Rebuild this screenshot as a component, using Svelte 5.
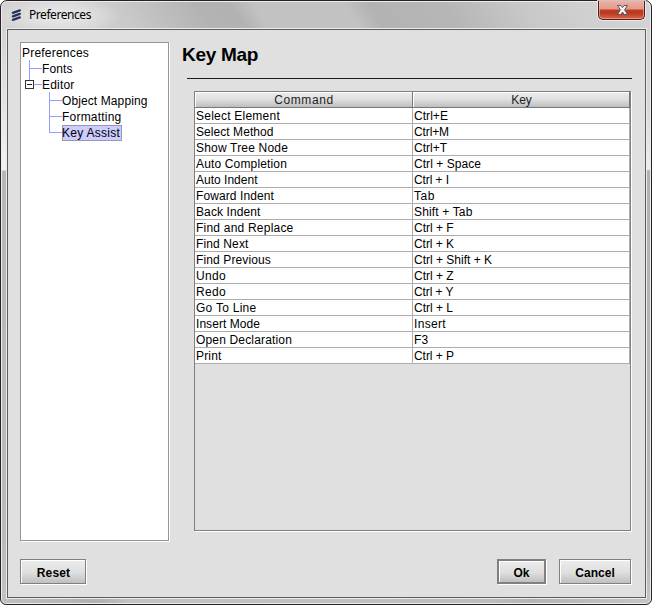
<script>
  const rows = [
    ['Select Element', 84, 'Ctrl+E', 34],
    ['Select Method', 77.5, 'Ctrl+M', 35],
    ['Show Tree Node', 92, 'Ctrl+T', 33],
    ['Auto Completion', 91, 'Ctrl + Space', 67],
    ['Auto Indent', 61.5, 'Ctrl + I', 35],
    ['Foward Indent', 78, 'Tab', 21],
    ['Back Indent', 64.5, 'Shift + Tab', 58.5],
    ['Find and Replace', 97.5, 'Ctrl + F', 39.5],
    ['Find Next', 52.5, 'Ctrl + K', 40],
    ['Find Previous', 75, 'Ctrl + Shift + K', 78],
    ['Undo', 30, 'Ctrl + Z', 39.5],
    ['Redo', 30, 'Ctrl + Y', 39.5],
    ['Go To Line', 60.5, 'Ctrl + L', 39],
    ['Insert Mode', 64, 'Insert', 32],
    ['Open Declaration', 96, 'F3', 14.5],
    ['Print', 25.5, 'Ctrl + P', 40]
  ];

  const tree = [
    { text: 'Preferences', depth: 0, width: 67 },
    { text: 'Fonts', depth: 1, width: 30.5 },
    { text: 'Editor', depth: 1, width: 32.5 },
    { text: 'Object Mapping', depth: 2, width: 85.5 },
    { text: 'Formatting', depth: 2, width: 59.5 },
    { text: 'Key Assist', depth: 2, width: 58, selected: true }
  ];

  // Spreads the letters of a label over a fixed width.
  function fit(node, width) {
    const natural = node.getBoundingClientRect().width;
    node.style.letterSpacing = (width - natural) / node.textContent.length + 'px';
  }
</script>

<div class="window">
  <header>
    <svg class="logo" width="11" height="12" viewBox="0 0 11 12">
      <g stroke="#26355b" stroke-width="2.3" stroke-linecap="round">
        <path d="M1.900 3.800L8.800 1.400M1.900 7.300L8.800 4.900M1.900 10.800L8.800 8.400" />
      </g>
    </svg>
    <span class="caption"><span use:fit={62}>Preferences</span></span>
    <div class="close">
      <svg width="13" height="12" viewBox="0 0 13 12">
        <path
          d="M1.500 1.500H4.900L6.500 3.600L8.100 1.500H11.500L8.600 5.800L11.500 10.500H8.100L6.500 8L4.900 10.500H1.500L4.400 5.800Z"
          fill="#f4f4f4" stroke="#515967" stroke-width="1" stroke-linejoin="round" />
      </svg>
    </div>
  </header>

  <main>
    <div class="panes">
      <div class="tree">
        <svg class="lines" width="60" height="100" viewBox="0 0 60 100" shape-rendering="crispEdges">
          <g fill="#9999ff">
            <rect x="8" y="17" width="1" height="20" />
            <rect x="8" y="25" width="13" height="1" />
            <rect x="13" y="41" width="8" height="1" />
            <rect x="28" y="49" width="1" height="41" />
            <rect x="28" y="57" width="13" height="1" />
            <rect x="28" y="73" width="13" height="1" />
            <rect x="28" y="89" width="13" height="1" />
          </g>
          <rect x="4" y="37" width="9" height="9" fill="#333" />
          <rect x="5" y="38" width="7" height="7" fill="#fff" />
          <rect x="6" y="41" width="5" height="1" fill="#222" />
        </svg>
        {#each tree as item}
          <div class="node" style:padding-left="{item.depth * 20}px">
            <div class="tag" class:selected={item.selected}><span use:fit={item.width}>{item.text}</span></div>
          </div>
        {/each}
      </div>

      <section>
        <h1><span use:fit={76}>Key Map</span></h1>
        <div class="rule"></div>
        <div class="table">
          <div class="row head">
            <div class="command"><span use:fit={59.5}>Command</span></div>
            <div class="key"><span use:fit={20.5}>Key</span></div>
          </div>
          {#each rows as [command, cw, key, kw]}
            <div class="row">
              <div class="command"><span use:fit={cw}>{command}</span></div>
              <div class="key"><span use:fit={kw}>{key}</span></div>
            </div>
          {/each}
        </div>
      </section>
    </div>

    <footer>
      <div class="button reset"><span use:fit={33.5}>Reset</span></div>
      <div class="button ok"><span use:fit={16}>Ok</span></div>
      <div class="button cancel"><span use:fit={39.5}>Cancel</span></div>
    </footer>
  </main>
</div>

<style>
  :global(body) {
    margin: 0;
    background: #fff;
  }
  .window {
    box-sizing: border-box;
    width: 652px;
    height: 605px;
    padding: 0 5px 5px;
    border: 1px solid #242226;
    border-radius: 7px 7px 6px 6px;
    box-shadow: inset 0 0 0 1px #eeecec;
    background:
      radial-gradient(ellipse 62px 20px at 58px 15px, #ebebebdd, #e6e6e6aa 50%, #d8d8d800) 0 0 / 100% 29px no-repeat,
      linear-gradient(57deg, #d4d2d2 0, #d2d2d2 70px, #cacaca 110px, #bebebe 145px, #b3b3b3 178px, #b2b2b2 206px, #c2c2c2 226px, #c2c2c2 302px, #b3b3b3 322px, #b6b6b6 386px, #c8c8c8 450px, #d0d0d0 500px, #d4d4d4) 0 0 / 100% 29px no-repeat,
      linear-gradient(90deg, #c0c0c0, #b0b0b0 15%, #c3c3c3 20%, #bdbdbd 75%, #b4b4b4 82%, #c6c6c6) 0 100% / 100% 7px no-repeat,
      linear-gradient(#d4d2d2, #d4d2d2 29px, #f5f3f2 169px, #b9b6b6 170px, #bdbaba 540px, #c3c3c3) 0 0 / 7px 100% no-repeat,
      linear-gradient(#d2d2d2, #d8d8d8 110px, #eee 168px, #b2b2b2 170px, #b8b8b8 560px, #c5c5c5) 100% 0 / 7px 100% no-repeat;
    font: 12px/15px "Liberation Sans", Arial, sans-serif;
    color: #000;
    display: flex;
    flex-direction: column;
  }
  span {
    white-space: pre;
  }
  header {
    height: 27px;
    display: flex;
    align-items: flex-start;
    flex: none;
  }
  .logo {
    margin: 8px 0 0 5px;
  }
  .caption {
    margin: 6px 0 0 7px;
    font: 12px/16px "Noto Sans", "Open Sans", sans-serif;
    flex: 1;
  }
  .close {
    box-sizing: border-box;
    width: 47px;
    height: 19px;
    margin-right: 1px;
    border: 1px solid #4d2020;
    border-top: 0;
    border-radius: 0 0 5px 5px;
    background: linear-gradient(#efada3 0, #e39a8c 8px, #c13a24 9px, #b93822 12px, #d75f3e 17px);
    box-shadow: inset 0 0 0 1px #f3b8ac99, 0 0 0 1px #f1eeeecc;
    display: flex;
    justify-content: center;
    padding: 3px 0 0 2px;
  }
  main {
    box-sizing: border-box;
    flex: 1;
    border: 1px solid #5c5e5c;
    outline: 1px solid #ebebeb;
    margin: 1px 0 1px 1px;
    background: #e0e0e0;
    padding: 12px 14px 0 12px;
  }
  .panes {
    display: flex;
    height: 499px;
  }
  .tree {
    box-sizing: border-box;
    position: relative;
    width: 149px;
    border: 1px solid #969696;
    background: #fff;
    box-shadow: 1px 1px 0 #fff;
    padding: 2px 0 0 1px;
  }
  .lines {
    position: absolute;
    left: 0;
    top: 0;
  }
  .node {
    height: 16px;
    display: flex;
  }
  .tag {
    height: 16px;
    line-height: 17px;
  }
  .selected {
    box-sizing: border-box;
    width: 60px;
    border: 1px solid #9898b4;
    background: #ccccff;
    line-height: 15px;
  }
  .selected span {
    margin-left: -1px;
  }
  section {
    margin-left: 13px;
    flex: 1;
    display: flex;
    flex-direction: column;
  }
  h1 {
    margin: 1px 0 0;
    height: 35px;
    font-size: 19px;
    line-height: 24px;
    font-weight: bold;
  }
  .rule {
    height: 1px;
    background: #1c1c1c;
    margin: 0 -1px 0 5px;
  }
  .table {
    box-sizing: border-box;
    width: 437px;
    height: 440px;
    margin: 12px 0 0 12px;
    border: 1px solid #808080;
    box-shadow: 1px 1px 0 #fff;
    flex: none;
  }
  .row {
    display: flex;
    height: 16px;
    background: #fff;
  }
  .row > div {
    box-sizing: border-box;
    padding-left: 1px;
    border-right: 1px solid #adadad;
    border-bottom: 1px solid #adadad;
    line-height: 16px;
  }
  .command {
    width: 218px;
  }
  .key {
    width: 217px;
  }
  .head > div {
    text-align: center;
    line-height: 17px;
    color: #222;
    border-color: #777;
    box-shadow: inset 1px 1px 0 #fff;
    background: linear-gradient(#ececec, #dfdfdf 50%, #bebebe);
  }
  footer {
    display: flex;
    margin-top: 18px;
  }
  .button {
    box-sizing: border-box;
    height: 25px;
    border: 1px solid #808080;
    box-shadow: inset 1px 1px 0 #fff, 1px 1px 0 #fff;
    background: linear-gradient(#ececec, #dfdfdf 55%, #bfbfbf);
    font-weight: bold;
    line-height: 26px;
    text-align: center;
  }
  .reset {
    width: 66px;
    margin-right: auto;
  }
  .reset span {
    margin-left: 1px;
  }
  .ok {
    width: 49px;
    margin-right: 13px;
    border-width: 2px;
    line-height: 24px;
  }
  .cancel {
    width: 72px;
  }
</style>
